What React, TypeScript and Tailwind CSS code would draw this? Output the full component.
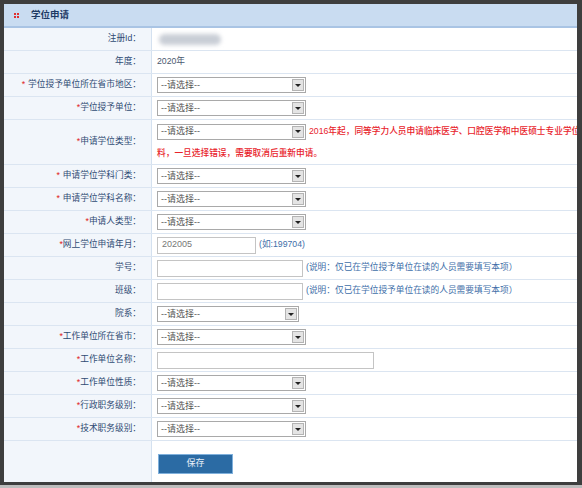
import React from "react";

type Field =
  | { kind: "select"; width?: number }
  | { kind: "input"; width: number; value?: string; note?: string }
  | { kind: "text"; value: string }
  | { kind: "blur" };

type Row = { label: string; star?: boolean; spaced?: boolean; field: Field };

const topRows: Row[] = [
  { label: "注册Id：", field: { kind: "blur" } },
  { label: "年度：", field: { kind: "text", value: "2020年" } },
  { label: "学位授予单位所在省市地区：", star: true, spaced: true, field: { kind: "select" } },
  { label: "学位授予单位：", star: true, field: { kind: "select" } },
];

const bottomRows: Row[] = [
  { label: "申请学位学科门类：", star: true, spaced: true, field: { kind: "select" } },
  { label: "申请学位学科名称：", star: true, spaced: true, field: { kind: "select" } },
  { label: "申请人类型：", star: true, field: { kind: "select" } },
  {
    label: "网上学位申请年月：",
    star: true,
    field: { kind: "input", width: 99, value: "202005", note: "(如:199704)" },
  },
  {
    label: "学号：",
    field: { kind: "input", width: 146, note: "(说明：仅已在学位授予单位在读的人员需要填写本项）" },
  },
  {
    label: "班级：",
    field: { kind: "input", width: 146, note: "(说明：仅已在学位授予单位在读的人员需要填写本项）" },
  },
  { label: "院系：", field: { kind: "select", width: 142 } },
  { label: "工作单位所在省市：", star: true, field: { kind: "select" } },
  { label: "工作单位名称：", star: true, field: { kind: "input", width: 217 } },
  { label: "工作单位性质：", star: true, field: { kind: "select" } },
  { label: "行政职务级别：", star: true, field: { kind: "select" } },
  { label: "技术职务级别：", star: true, field: { kind: "select" } },
];

function Select({ width = 149 }: { width?: number }) {
  return (
    <div
      className="flex h-[16px] shrink-0 items-center border border-[#a9a9a9] bg-white"
      style={{ width }}
    >
      <span className="flex-1 pl-[3px] text-[9px] leading-none text-[#555]">--请选择--</span>
      <span className="m-px flex h-[12px] w-[12px] items-center justify-center border border-[#b4b4b4] bg-[#e4e4e4]">
        <span className="h-0 w-0 border-x-[3px] border-t-[3px] border-x-transparent border-t-[#222]" />
      </span>
    </div>
  );
}

function Label({ row }: { row: Row }) {
  return (
    <div className="flex w-[148px] shrink-0 items-center justify-end self-stretch whitespace-nowrap border-r border-[#d4e1f0] bg-[#f2f6fb] pr-[10px] text-[8.7px] text-[#2f4b73]">
      {row.star && <span className="text-[#e02020]">*</span>}
      {row.spaced && <span className="w-[3px]" />}
      <span>{row.label}</span>
    </div>
  );
}

function FieldCell({ field }: { field: Field }) {
  if (field.kind === "select") return <Select width={field.width} />;
  if (field.kind === "text")
    return <span className="text-[8.7px] text-[#4a5a70]">{field.value}</span>;
  if (field.kind === "blur")
    return <div className="ml-[2px] h-[11px] w-[62px] rounded-full bg-[#c9ced6] blur-[2px]" />;
  return (
    <div className="flex items-center">
      <div
        className="flex h-[17px] shrink-0 items-center border border-[#c4c4c4] bg-white pl-[4px] text-[9px] text-[#777]"
        style={{ width: field.width }}
      >
        {field.value}
      </div>
      {field.note && (
        <span className="ml-[3px] whitespace-nowrap text-[8.7px] text-[#3d6ea8]">{field.note}</span>
      )}
    </div>
  );
}

function FormRow({ row }: { row: Row }) {
  return (
    <div className="flex h-[23px] border-b border-[#dbe5f1]">
      <Label row={row} />
      <div className="flex flex-1 items-center pl-[5px]">
        <FieldCell field={row.field} />
      </div>
    </div>
  );
}

export default function App() {
  return (
    <div className="flex h-[488px] w-[582px] flex-col bg-[#3e3e3e] font-['Liberation_Sans','Noto_Sans_CJK_SC',sans-serif]">
      <div className="ml-[4px] mr-[5px] mt-[4px] flex h-[478px] flex-col overflow-hidden bg-white">
        <div className="flex h-[24px] shrink-0 items-center border-b-2 border-[#a9c4e4] bg-[#c9dcf1] pl-[10px]">
          <span className="grid grid-cols-2 gap-px">
            <span className="h-[2px] w-[2px] bg-[#e03030]" />
            <span className="h-[2px] w-[2px] bg-[#e03030]" />
            <span className="h-[2px] w-[2px] bg-[#e03030]" />
            <span className="h-[2px] w-[2px] bg-[#e03030]" />
          </span>
          <span className="ml-[12px] text-[9.5px] font-bold text-[#1e3a64]">学位申请</span>
        </div>

        {topRows.map((r) => (
          <FormRow key={r.label} row={r} />
        ))}

        <div className="flex h-[45px] border-b border-[#dbe5f1]">
          <Label row={{ label: "申请学位类型：", star: true, field: { kind: "select" } }} />
          <div className="flex min-w-0 flex-1 flex-col justify-center gap-[7px] overflow-hidden pl-[5px]">
            <div className="flex items-center">
              <Select />
              <span className="ml-[3px] whitespace-nowrap text-[8.7px] font-medium text-[#e8232b]">
                2016年起，同等学力人员申请临床医学、口腔医学和中医硕士专业学位
              </span>
            </div>
            <span className="whitespace-nowrap text-[8.7px] font-medium text-[#e8232b]">
              料，一旦选择错误，需要取消后重新申请。
            </span>
          </div>
        </div>

        {bottomRows.map((r) => (
          <FormRow key={r.label} row={r} />
        ))}

        <div className="flex flex-1">
          <div className="w-[148px] shrink-0 border-r border-[#d4e1f0] bg-[#f2f6fb]" />
          <div className="flex-1 pl-[6px] pt-[8px]">
            <button className="h-[20px] w-[75px] border border-[#7fb0dc] bg-[#2b6ba4] text-[9px] text-[#e8f0f8]">
              保存
            </button>
          </div>
        </div>
      </div>
      <div className="h-[3px] bg-[#3e3e3e]" />
      <div className="h-[3px] bg-[#bdbdbd]" />
    </div>
  );
}
